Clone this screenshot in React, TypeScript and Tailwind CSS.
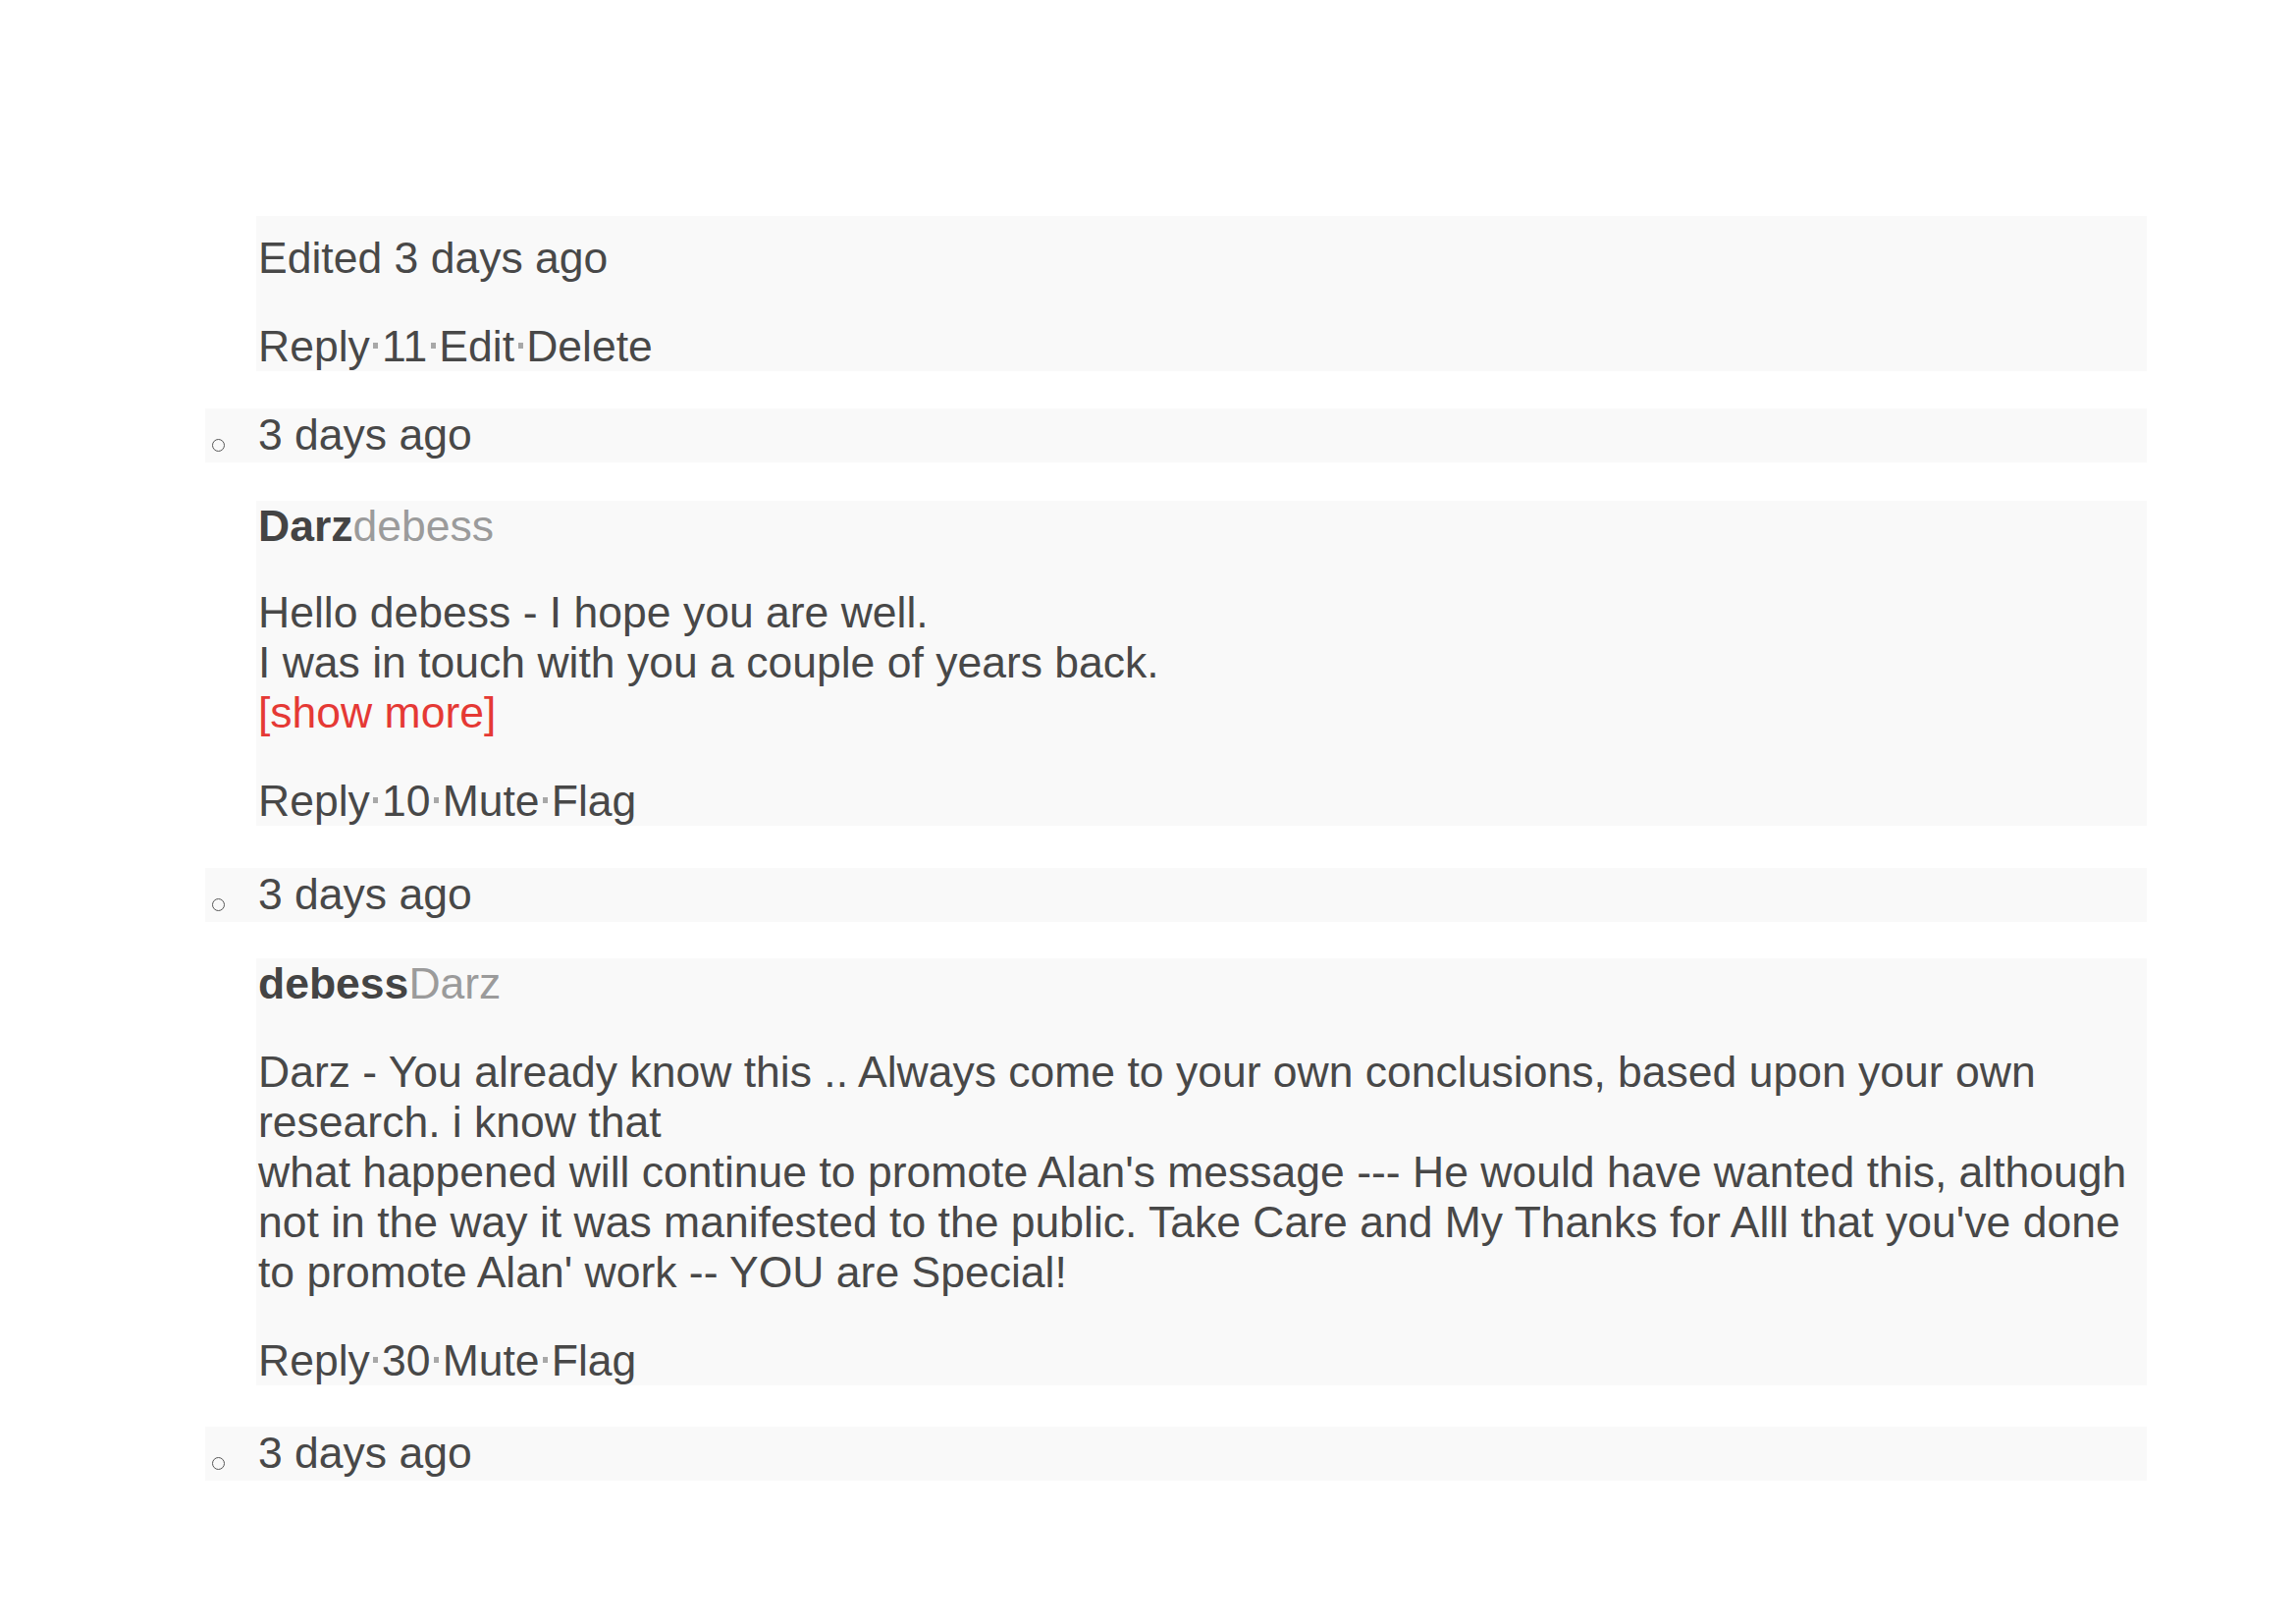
import type { ReactNode } from "react";

const font = { fontFamily: '"Liberation Sans", Arial, sans-serif' };

function Dot() {
  return <span className="mx-[3.6px] inline-block h-[6px] w-[5px] bg-[#a8a8a8] align-[13px]" />;
}

function Actions({ items }: { items: string[] }) {
  return (
    <div className="mt-[39px] whitespace-nowrap">
      {items.map((it, i) => (
        <span key={i}>
          {i > 0 && <Dot />}
          {it}
        </span>
      ))}
    </div>
  );
}

function Body({ className = "", children }: { className?: string; children: ReactNode }) {
  return (
    <div className={`ml-[52px] bg-[#f9f9f9] pl-[2px] ${className}`}>{children}</div>
  );
}

function Meta({ className = "" }: { className?: string }) {
  return (
    <div className={`flex h-[55px] items-start bg-[#f9f9f9] ${className}`}>
      <div className="flex w-[54px] shrink-0 pl-[7px] pt-[31px]">
        <span className="block h-[13px] w-[13px] rounded-full border border-[#555]" />
      </div>
      <span className="pt-[1px]">3 days ago</span>
    </div>
  );
}

function Names({ bold, light }: { bold: string; light: string }) {
  return (
    <div>
      <span className="font-bold text-[#444]">{bold}</span>
      <span className="text-[#9b9b9b]">{light}</span>
    </div>
  );
}

export default function App() {
  return (
    <div className="min-h-screen bg-white" style={font}>
      <div className="w-[2187px] pl-[209px] pt-[220px] text-[44.5px] leading-[51px] text-[#484848]">
        <Body className="pt-[17px]">
          <div>Edited 3 days ago</div>
          <Actions items={["Reply", "11", "Edit", "Delete"]} />
        </Body>

        <Meta className="mt-[38px]" />

        <Body className="mt-[39px]">
          <Names bold="Darz" light="debess" />
          <div className="mt-[37px]">
            Hello debess - I hope you are well.
            <br />I was in touch with you a couple of years back.
            <br />
            <span className="cursor-pointer text-[#e53935]">[show more]</span>
          </div>
          <Actions items={["Reply", "10", "Mute", "Flag"]} />
        </Body>

        <Meta className="mt-[43px]" />

        <Body className="mt-[37px]">
          <Names bold="debess" light="Darz" />
          <div className="mt-[39px] whitespace-nowrap">
            Darz - You already know this .. Always come to your own conclusions, based upon your own
            <br />
            research. i know that
            <br />
            what happened will continue to promote Alan's message --- He would have wanted this, although
            <br />
            not in the way it was manifested to the public. Take Care and My Thanks for Alll that you've done
            <br />
            to promote Alan' work -- YOU are Special!
          </div>
          <Actions items={["Reply", "30", "Mute", "Flag"]} />
        </Body>

        <Meta className="mt-[42px]" />
      </div>
    </div>
  );
}
